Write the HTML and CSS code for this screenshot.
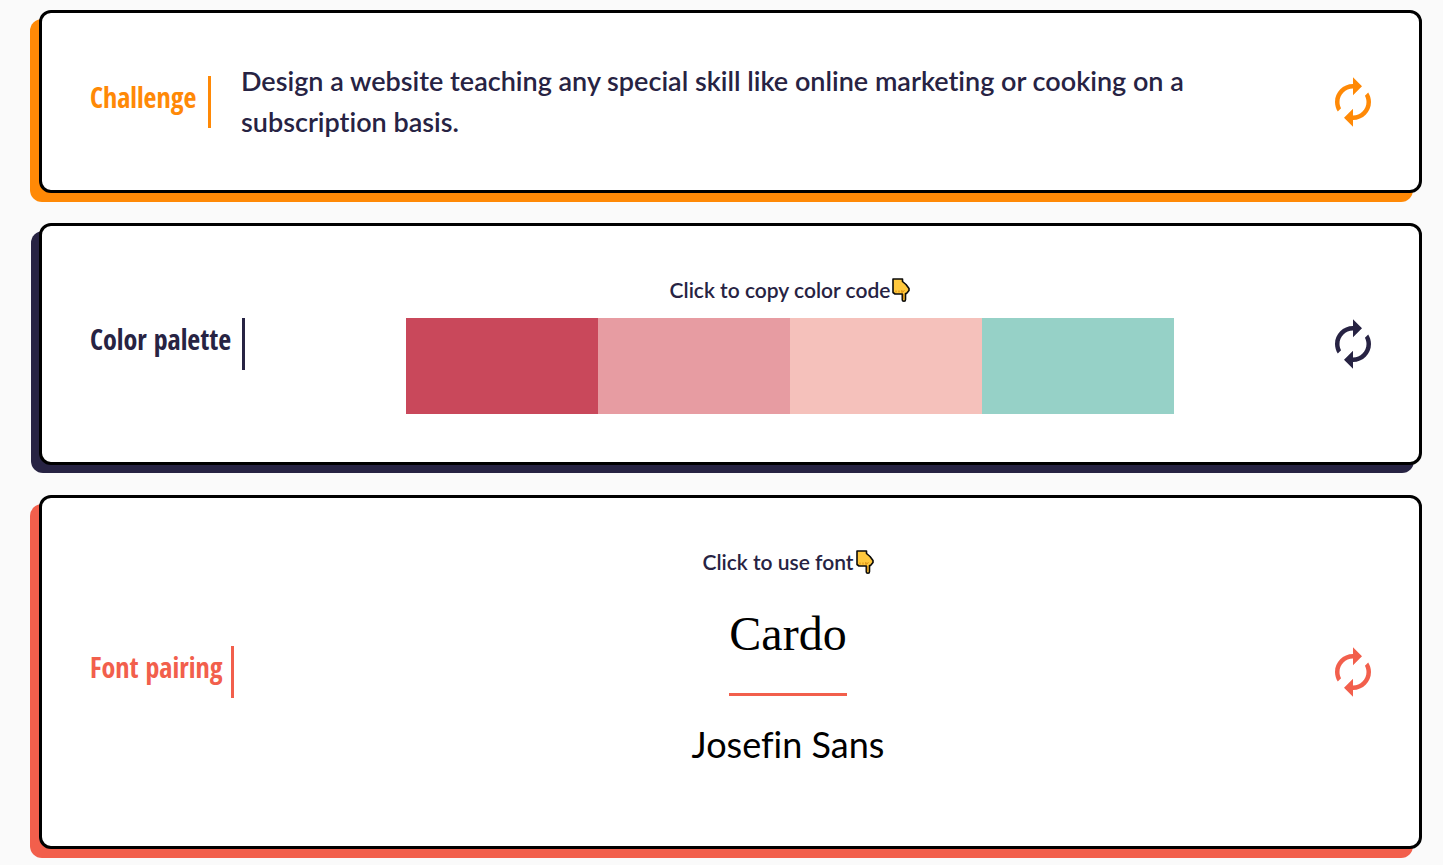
FILE: index.html
```html
<!DOCTYPE html>
<html lang="en">
<head>
<meta charset="utf-8">
<meta name="viewport" content="width=device-width, initial-scale=1">
<title>Design challenge</title>
<link rel="stylesheet" href="styles.css">
</head>
<body>
<svg class="defs" aria-hidden="true">
  <symbol id="renew" viewBox="0 0 24 24"><path fill="currentColor" d="M12 6v3l4-4-4-4v3c-4.42 0-8 3.58-8 8 0 1.57.46 3.03 1.24 4.26L6.700 14.800c-.45-.83-.7-1.790-.7-2.800 0-3.310 2.690-6 6-6zm6.760 1.740L17.300 9.200c.44.840.7 1.790.7 2.800 0 3.310-2.690 6-6 6v-3l-4 4 4 4v-3c4.420 0 8-3.580 8-8 0-1.570-.46-3.030-1.240-4.260z"/></symbol>
  <symbol id="hand" viewBox="0 0 18 24"><path d="M1 1H10.500V3.500L14 6.500L17 10.500V12.500L14.500 15.500H13.500V21.500Q13.500 23.200 12 23.200Q10.300 23.200 10.300 21.500V16H3L1 14.500Z" fill="#ffc83d" stroke="#0a0a0a" stroke-width="1.600" stroke-linejoin="round"/><path d="M4 12.500V14.500M7 12.500V14.500M9.800 12V14.500L12.500 12.500M11.400 16V21" fill="none" stroke="#d68a10" stroke-width="1"/></symbol>
</svg>
<main class="page">
  <section class="card card-challenge">
    <h2 class="title">Challenge</h2>
    <p class="brief">Design a website teaching any special skill like online marketing or cooking on a subscription basis.</p>
    <button class="refresh" type="button" aria-label="New challenge"><svg class="renew"><use href="#renew"/></svg></button>
  </section>
  <section class="card card-palette">
    <h2 class="title">Color palette</h2>
    <div class="content">
      <p class="caption">Click to copy color code<svg class="hand"><use href="#hand"/></svg></p>
      <div class="swatches">
        <button class="swatch swatch-red" type="button" aria-label="Copy red"></button>
        <button class="swatch swatch-rose" type="button" aria-label="Copy rose"></button>
        <button class="swatch swatch-peach" type="button" aria-label="Copy peach"></button>
        <button class="swatch swatch-mint" type="button" aria-label="Copy mint"></button>
      </div>
    </div>
    <button class="refresh" type="button" aria-label="New palette"><svg class="renew"><use href="#renew"/></svg></button>
  </section>
  <section class="card card-fonts">
    <h2 class="title">Font pairing</h2>
    <div class="content">
      <p class="caption">Click to use font<svg class="hand"><use href="#hand"/></svg></p>
      <a class="font font-heading" href="#cardo">Cardo</a>
      <a class="font font-body" href="#josefin">Josefin Sans</a>
    </div>
    <button class="refresh" type="button" aria-label="New font pairing"><svg class="renew"><use href="#renew"/></svg></button>
  </section>
</main>
</body>
</html>
```
FILE: styles.css
```css
* { box-sizing: border-box; }
body {
  margin: 0;
  background: #fafafa;
  color: #272343;
  font-family: Lato, "Open Sans", sans-serif;
  font-variant-ligatures: none;
}
.defs { position: absolute; width: 0; height: 0; }
.page {
  display: flex;
  flex-direction: column;
  gap: 30px;
  padding: 10px 21px 16px 39px;
}
.card {
  display: flex;
  align-items: center;
  padding: 48px 39px 48px 48px;
  background: #fff;
  border: 3px solid #000;
  border-radius: 12px;
  box-shadow: -9px 9px 0 var(--accent);
}
.card-challenge { --accent: #ff8906; --title: 121px; --inset: 30px; min-height: 183px; padding-block: 44px; }
.card-palette { --accent: #272343; --title: 155px; --inset: 9px; box-shadow: -8px 8px 0 var(--accent); }
.card-fonts { --accent: #f25f4c; --title: 144px; --inset: 16px; min-height: 354px; }
.title {
  flex: none;
  width: var(--title);
  margin: 0;
  padding-bottom: 10px;
  border-right: 3px solid var(--accent);
  color: var(--accent);
  font: bold 28px/42px "Open Sans Condensed", "Liberation Sans Narrow", "DejaVu Sans Condensed", sans-serif;
  white-space: nowrap;
}
.brief {
  flex: 1;
  margin: 0;
  padding: 0 0 2px var(--inset);
  font-size: 27px;
  line-height: 41px;
  font-weight: 600;
}
.content {
  flex: 1;
  display: flex;
  flex-direction: column;
  align-items: center;
  padding-left: var(--inset);
}
.caption {
  display: flex;
  align-items: center;
  gap: 2px;
  margin: 0;
  font-size: 21px;
  line-height: 32px;
  font-weight: 600;
}
.hand { width: 18px; height: 24px; }
.swatches { display: flex; width: 100%; max-width: 768px; margin-top: 12px; }
.swatch { flex: 1; height: 96px; padding: 0; border: 0; cursor: pointer; }
.swatch-red { background: #c9485b; }
.swatch-rose { background: #e79ca2; }
.swatch-peach { background: #f5c1bb; }
.swatch-mint { background: #96d1c7; }
.font { color: #000; text-decoration: none; }
.font-heading {
  margin-top: 24px;
  padding-bottom: 27px;
  border-bottom: 3px solid var(--accent);
  font: 48px/64px "Liberation Serif", serif;
}
.font-body {
  margin-top: 24px;
  padding-bottom: 30px;
  font-size: 36px;
  line-height: 48px;
}
.refresh {
  flex: none;
  display: flex;
  padding: 0;
  border: 0;
  background: none;
  color: var(--accent);
  cursor: pointer;
}
.renew { width: 54px; height: 54px; }
```
